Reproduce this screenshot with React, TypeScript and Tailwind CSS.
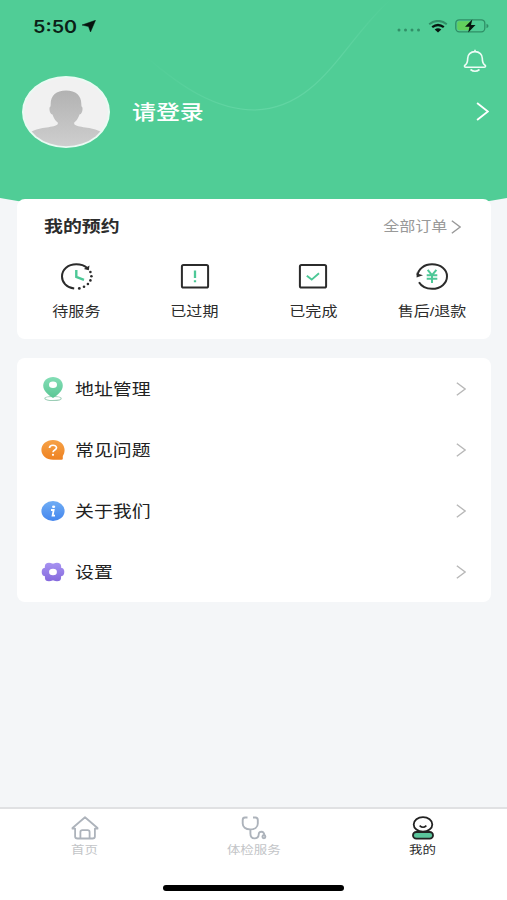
import React from 'react';
import clsx from 'clsx';

const fontStack = "font-['Liberation_Sans','Noto_Sans_CJK_SC',sans-serif]";

interface WideProps {
  children: React.ReactNode;
  className?: string;
}

// Horizontally widened label
const Wide: React.FC<WideProps> = ({ children, className }) => (
  <span className={clsx('inline-block scale-x-[1.18] whitespace-nowrap', className)}>{children}</span>
);

const Chevron: React.FC<{ className?: string }> = ({ className }) => (
  <svg viewBox="0 0 12 18" preserveAspectRatio="none" fill="none" stroke="currentColor" className={className}>
    <path d="M1 1L11 9L1 17" strokeWidth="1.7" />
  </svg>
);

const ClockIcon = () => (
  <svg width="34" height="30" viewBox="0 0 34 30" fill="none">
    <path d="M15.2 27.6C7.5 26.6 3 21.5 3 15.5C3 8.5 9 3.3 17.3 3.3C21.8 3.3 25.5 4.6 28.3 7" stroke="#2b2b2b" strokeWidth="2" />
    <path d="M30.5 4.6L29.8 9.2L24.8 7.9Z" fill="#2b2b2b" />
    <g fill="#2b2b2b">
      <circle cx="31.4" cy="11" r="1.3" />
      <circle cx="32.4" cy="15.2" r="1.3" />
      <circle cx="31.4" cy="19.4" r="1.3" />
      <circle cx="28.9" cy="23" r="1.3" />
      <circle cx="25" cy="25.8" r="1.3" />
      <circle cx="20.3" cy="27.4" r="1.4" />
    </g>
    <path d="M17.3 9V16L25 18.8" stroke="#4dc897" strokeWidth="2.4" />
  </svg>
);

const ExpiredIcon = () => (
  <svg width="34" height="30" viewBox="0 0 34 30" fill="none">
    <rect x="3.9" y="3.9" width="26.2" height="22.6" rx="1.6" stroke="#2b2b2b" strokeWidth="2" />
    <path d="M17 9.5V17M17 19.3V21.3" stroke="#4dc897" strokeWidth="2.3" />
  </svg>
);

const DoneIcon = () => (
  <svg width="34" height="30" viewBox="0 0 34 30" fill="none">
    <rect x="3.9" y="3.9" width="26.2" height="22.6" rx="1.6" stroke="#2b2b2b" strokeWidth="2" />
    <path d="M10.8 14.7L15.7 18.6L23 12.2" stroke="#4dc897" strokeWidth="1.9" />
  </svg>
);

const RefundIcon = () => (
  <svg width="34" height="30" viewBox="0 0 34 30" fill="none">
    <path d="M2.6 14.2C3.2 8 9.2 3.3 17 3.3C25.8 3.3 32 8.6 32 15.3C32 22.2 25.8 27.8 17 27.8C11 27.8 6.4 25.3 4 21.3" stroke="#2b2b2b" strokeWidth="2" />
    <path d="M1.6 11.5V16.5L8 14.2L4 13Z" fill="#2b2b2b" />
    <path d="M12.7 8.9L17 14.2L21.4 8.9M17 14V22M11.7 14.2H22.3M11.7 17.8H22.3" stroke="#4dc897" strokeWidth="2" />
  </svg>
);

const PinIcon = () => (
  <svg width="24" height="26" viewBox="0 0 24 26">
    <defs>
      <linearGradient id="pin" x1="0" y1="0" x2="0" y2="1">
        <stop offset="0" stopColor="#84deb6" />
        <stop offset="1" stopColor="#5ac694" />
      </linearGradient>
    </defs>
    <ellipse cx="12" cy="22.5" rx="8.2" ry="2" fill="none" stroke="#9ccdb6" strokeWidth="1.1" />
    <path d="M12 1C17.6 1 21.8 4.8 21.8 9.8C21.8 14.6 17 19 12 22C7 19 2.2 14.6 2.2 9.8C2.2 4.8 6.4 1 12 1Z" fill="url(#pin)" />
    <ellipse cx="12" cy="8.7" rx="4" ry="3.3" fill="#fff" />
  </svg>
);

const QuestionIcon = () => (
  <svg width="24" height="24" viewBox="0 0 24 24">
    <defs>
      <linearGradient id="ask" x1="0" y1="0" x2="0" y2="1">
        <stop offset="0" stopColor="#f6a247" />
        <stop offset="1" stopColor="#ee8222" />
      </linearGradient>
    </defs>
    <path d="M12 2C18.5 2 23.6 6.3 23.6 12C23.6 14.5 22.8 16.5 21.8 18V20.8Q21.8 21.8 20.5 21.8H12C5.5 21.8 0.4 17.5 0.4 12C0.4 6.3 5.5 2 12 2Z" fill="url(#ask)" />
    <path d="M8.5 9.9C8.5 6.4 15.5 6.4 15.5 9.8C15.5 12 12 11.9 12 14.2" fill="none" stroke="#fff" strokeWidth="1.7" />
    <circle cx="12" cy="16.8" r="1.1" fill="#fff" />
  </svg>
);

const InfoIcon = () => (
  <svg width="24" height="24" viewBox="0 0 24 24">
    <defs>
      <linearGradient id="info" x1="0" y1="0" x2="0" y2="1">
        <stop offset="0" stopColor="#70adf4" />
        <stop offset="1" stopColor="#4486ee" />
      </linearGradient>
    </defs>
    <ellipse cx="12" cy="12" rx="11.6" ry="10" fill="url(#info)" />
    <ellipse cx="12.6" cy="7.7" rx="1.6" ry="1.2" fill="#fff" />
    <path d="M10 11H12.7L11.6 16.7H14" fill="none" stroke="#fff" strokeWidth="1.8" />
  </svg>
);

const GearIcon = () => (
  <svg width="24" height="24" viewBox="0 0 24 24">
    <defs>
      <linearGradient id="gear" gradientUnits="userSpaceOnUse" x1="0" y1="2" x2="0" y2="22">
        <stop offset="0" stopColor="#a894f2" />
        <stop offset="1" stopColor="#8468dc" />
      </linearGradient>
    </defs>
    <g fill="url(#gear)">
      <ellipse cx="12" cy="12" rx="9.8" ry="8.4" />
      <ellipse cx="4.6" cy="12" rx="3.9" ry="4.2" />
      <ellipse cx="19.4" cy="12" rx="3.9" ry="4.2" />
      <ellipse cx="8" cy="6.2" rx="4.1" ry="3.5" />
      <ellipse cx="16" cy="6.2" rx="4.1" ry="3.5" />
      <ellipse cx="8" cy="17.8" rx="4.1" ry="3.5" />
      <ellipse cx="16" cy="17.8" rx="4.1" ry="3.5" />
    </g>
    <ellipse cx="12" cy="12" rx="3.9" ry="3.3" fill="#fff" />
  </svg>
);

const HomeIcon = () => (
  <svg width="28" height="24" viewBox="0 0 28 24" fill="none" stroke="#adb3bb" strokeWidth="1.8" strokeLinejoin="round">
    <path d="M1.5 12.7V12L14 1.3L26.5 12V12.7H23.9V20.5Q23.9 22.5 21.5 22.5H6.5Q4.1 22.5 4.1 20.5V12.7Z" />
    <path d="M9.4 22V16Q9.4 14.2 11.4 14.2H16.6Q18.6 14.2 18.6 16V22" />
  </svg>
);

const StethoscopeIcon = () => (
  <svg width="28" height="24" viewBox="0 0 28 24" fill="none" stroke="#adb3bb" strokeWidth="1.9">
    <path d="M7.5 1.5H5Q2.7 1.5 2.7 4V7.5C2.7 11 5.5 13.4 10.2 13.4C14.9 13.4 17.8 11 17.8 7.5V4Q17.8 1.5 15.5 1.5H13" />
    <path d="M10.4 13.4V17.5C10.4 24 18.7 23.7 18.7 18.5C18.7 14.6 24.5 14.8 24.2 19" />
    <circle cx="23.9" cy="20.7" r="1.5" />
  </svg>
);

const ProfileIcon = () => (
  <svg width="28" height="24" viewBox="0 0 28 24" fill="none" stroke="#222" strokeWidth="1.8">
    <ellipse cx="14" cy="8.4" rx="9.3" ry="7.3" />
    <path d="M10.6 9.6Q14 12.9 17.4 9.6" strokeWidth="1.5" />
    <rect x="4" y="16" width="20" height="6.7" rx="3.3" fill="#5bc69c" />
  </svg>
);

const orders = [
  { label: '待服务', Icon: ClockIcon },
  { label: '已过期', Icon: ExpiredIcon },
  { label: '已完成', Icon: DoneIcon },
  { label: '售后/退款', Icon: RefundIcon },
];

const menu = [
  { label: '地址管理', Icon: PinIcon },
  { label: '常见问题', Icon: QuestionIcon },
  { label: '关于我们', Icon: InfoIcon },
  { label: '设置', Icon: GearIcon },
];

const tabs = [
  { label: '首页', Icon: HomeIcon, active: false },
  { label: '体检服务', Icon: StethoscopeIcon, active: false },
  { label: '我的', Icon: ProfileIcon, active: true },
];

const StatusBar = () => (
  <div className="flex h-[52px] items-center justify-between pr-[18px] pl-[33px]">
    <div className="flex items-center">
      <span className="mt-[2px] w-[45px] text-[17px] leading-none text-[#0b1f17]">
        <span className="inline-block origin-left scale-x-[1.16] font-['Inter','Liberation_Sans',sans-serif] font-semibold">5:50</span>
      </span>
      <svg width="14" height="12" viewBox="0 0 14 12" className="ml-1">
        <path d="M0 5L13.5 0.3L8.5 12L6.5 6.5Z" fill="#07140f" stroke="#07140f" strokeWidth="0.5" />
      </svg>
    </div>
    <div className="flex items-center">
      <svg width="26" height="6" viewBox="0 0 26 6" fill="#319068" className="mt-[10px] mr-[6px]">
        <circle cx="3" cy="2" r="1.5" />
        <circle cx="9.5" cy="2" r="1.5" />
        <circle cx="16" cy="2" r="1.5" />
        <circle cx="22.5" cy="2" r="1.5" />
      </svg>
      <svg width="20" height="13" viewBox="0 0 20 13" fill="none" className="mr-[7px]">
        <path d="M1.2 4.2Q10 -2.4 18.8 4.2" stroke="#319068" strokeWidth="2" />
        <path d="M4.2 7.2Q10 2.7 15.8 7.2" stroke="#07140f" strokeWidth="2.3" />
        <path d="M6.7 9.6Q10 7 13.3 9.6L10 12.5Z" fill="#07140f" />
      </svg>
      <svg width="34" height="14" viewBox="0 0 34 14">
        <rect x="0.8" y="0.8" width="29" height="12" rx="3.5" fill="none" stroke="#2f8f66" strokeWidth="1.3" />
        <rect x="2.3" y="2.3" width="14" height="9" rx="2" fill="#62cf5c" />
        <path d="M31.5 4.7Q33.5 5.5 33.5 7Q33.5 8.5 31.5 9.3Z" fill="#2f8f66" />
        <path d="M17.3 0.5L10 7.8H14.5L13.2 13.5L20.5 6H16Z" fill="#07140f" />
      </svg>
    </div>
  </div>
);

const Avatar = () => (
  <svg width="88" height="72" viewBox="0 0 88 72">
    <defs>
      <linearGradient id="person" x1="0" y1="0" x2="0" y2="1">
        <stop offset="0" stopColor="#b2b2b2" />
        <stop offset="1" stopColor="#d0d0d0" />
      </linearGradient>
      <clipPath id="avatarClip">
        <ellipse cx="44" cy="36" rx="42" ry="34.2" />
      </clipPath>
    </defs>
    <ellipse cx="44" cy="36" rx="44" ry="36" fill="#e9fbf3" />
    <ellipse cx="44" cy="36" rx="42" ry="34.2" fill="#f1f1f1" />
    <g fill="url(#person)" clipPath="url(#avatarClip)">
      <path d="M44 14.5C54 14.5 59.5 20 59.3 28L59.5 30.5C61.5 31 60.5 38 57.5 38.5C56.5 42 54 45.5 52.2 46.5V48C55 52 70 50.5 79 56V74H9V56C18 50.5 33 52 35.8 48V46.5C34 45.5 31.5 42 30.5 38.5C27.5 38 26.5 31 28.5 30.5L28.7 28C28.5 20 34 14.5 44 14.5Z" />
    </g>
  </svg>
);

const Header = () => (
  <header className="relative h-[199px]">
    {/* curved backdrop, continues under the first card */}
    <svg width="507" height="224" viewBox="0 0 507 224" className="absolute top-0 left-0">
      <defs>
        <linearGradient id="waveLine" x1="0" y1="0" x2="1" y2="0">
          <stop offset="0" stopColor="#7be0b5" stopOpacity="0" />
          <stop offset="0.4" stopColor="#7be0b5" stopOpacity="0.45" />
          <stop offset="0.8" stopColor="#7be0b5" stopOpacity="0.35" />
          <stop offset="1" stopColor="#7be0b5" stopOpacity="0" />
        </linearGradient>
      </defs>
      <path d="M0 0H507V198Q253.5 244 0 198Z" fill="#50cd96" />
      <path d="M145 56C180 86 215 110 255 110C320 108 343 42 390 0" fill="none" stroke="url(#waveLine)" strokeWidth="1.2" />
    </svg>
    <div className="relative">
      <StatusBar />
      <div className="flex h-6 justify-end pr-5">
        <svg width="24" height="24" viewBox="0 0 24 24" fill="none" stroke="#effcf6" strokeWidth="1.6" className="-mt-[3px]">
          <path d="M12 0.8V2.6M12 2.6C7.5 2.6 4.7 5.8 4.7 9.3C4.7 13 4.5 14.5 2.2 16C0.8 17 1.5 18.3 3 18.3H21C22.5 18.3 23.2 17 21.8 16C19.5 14.5 19.3 13 19.3 9.3C19.3 5.8 16.5 2.6 12 2.6Z" />
          <path d="M7.5 20.5Q12 24 16.5 20.5" />
        </svg>
      </div>
      <div className="flex h-[72px] items-center pr-[18px] pl-[22px]">
        <Avatar />
        <Wide className="mt-[3px] ml-[22px] origin-left text-[20.3px] font-medium text-white">请登录</Wide>
        <Chevron className="-mt-px ml-auto h-[19px] w-[13px] text-white" />
      </div>
    </div>
  </header>
);

const App: React.FC = () => {
  return (
    <div className={clsx('flex h-[900px] w-[507px] flex-col overflow-hidden bg-[#f4f6f8]', fontStack)}>
      <Header />

      <main className="relative flex flex-1 flex-col gap-[19px] pr-[16px] pl-[17px]">
        {/* Appointments */}
        <section className="h-[140px] rounded-lg bg-white">
          <div className="flex h-[56px] items-center justify-between pr-[30px] pl-[27px]">
            <Wide className="origin-left text-[16px] font-bold text-[#2c2c2c]">我的预约</Wide>
            <div className="flex items-center gap-[4px] text-[#999]">
              <Wide className="origin-right text-[13.6px]">全部订单</Wide>
              <Chevron className="h-[14px] w-[10px]" />
            </div>
          </div>
          <div className="grid grid-cols-4">
            {orders.map(({ label, Icon }) => (
              <div key={label} className="flex flex-col items-center">
                <div className="mt-[6px]">
                  <Icon />
                </div>
                <Wide className="mt-[11px] text-[13.6px] leading-5 text-[#2c2c2c]">{label}</Wide>
              </div>
            ))}
          </div>
        </section>

        {/* Menu */}
        <section className="h-[244px] rounded-lg bg-white">
          {menu.map(({ label, Icon }) => (
            <div key={label} className="flex h-[61px] items-center pr-[25px] pl-6">
              <Icon />
              <Wide className="mt-[3px] ml-[10px] origin-left text-[16px] text-[#222]">{label}</Wide>
              <Chevron className="ml-auto h-[14px] w-[10px] text-[#b8b8b8]" />
            </div>
          ))}
        </section>
      </main>

      <nav className="h-[93px] border-t-2 border-[#e0e1e3] bg-white">
        <div className="grid h-[76px] grid-cols-3">
          {tabs.map(({ label, Icon, active }) => (
            <div key={label} className="flex flex-col items-center pt-[7px]">
              <Icon />
              <Wide className={clsx('mt-[2px] text-[11.4px] leading-4', active ? 'text-[#2c2c2c]' : 'text-[#c3c5c8]')}>
                {label}
              </Wide>
            </div>
          ))}
        </div>
        <div className="mx-auto h-[6px] w-[181px] rounded-full bg-black" />
      </nav>
    </div>
  );
};

export default App;
